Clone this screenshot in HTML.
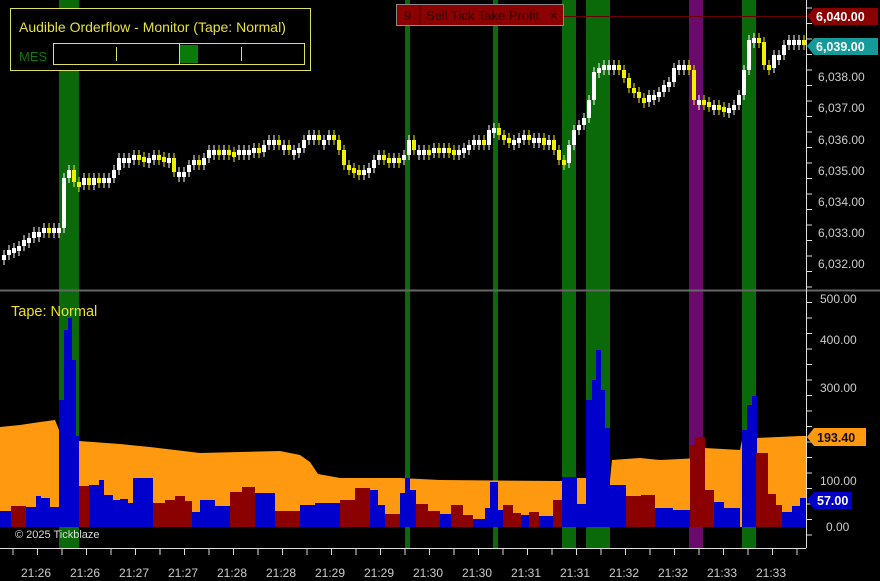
<!DOCTYPE html><html><head><meta charset="utf-8"><style>
body{margin:0;background:#000;width:880px;height:581px;overflow:hidden;font-family:"Liberation Sans",sans-serif}
svg{position:absolute;left:0;top:0}
</style></head><body>
<svg id="s" width="880" height="581" xmlns="http://www.w3.org/2000/svg">
<rect width="880" height="581" fill="#000"/>
<g id="bands"></g>
<line x1="548" y1="16.5" x2="806" y2="16.5" stroke="#6a0000" stroke-width="1"/>
<g id="cand"></g>
<g id="lower"></g>
<line x1="0" y1="290.5" x2="880" y2="290.5" stroke="#666" stroke-width="2"/>
<line x1="806.5" y1="0" x2="806.5" y2="548" stroke="#ddd"/>
<line x1="0" y1="548.5" x2="806" y2="548.5" stroke="#ddd"/>
<g id="ticks" stroke="#ddd"></g>
<g font-size="12" fill="#ccc" font-family="Liberation Sans,sans-serif">
<text x="818" y="81">6,038.00</text><text x="818" y="112">6,037.00</text><text x="818" y="144">6,036.00</text><text x="818" y="175">6,035.00</text><text x="818" y="206">6,034.00</text><text x="818" y="237">6,033.00</text><text x="818" y="268">6,032.00</text>
<text x="820" y="303">500.00</text><text x="820" y="344">400.00</text><text x="820" y="392">300.00</text><text x="820" y="485">100.00</text><text x="826" y="531">0.00</text>
</g>
<path d="M807 16 L814 8 H878 V25 H814Z" fill="#8b0000"/>
<text x="816" y="21" font-size="12.5" font-weight="bold" fill="#fff">6,040.00</text>
<path d="M807 46 L814 38 H878 V55 H814Z" fill="#159a9a"/>
<text x="816" y="51" font-size="12.5" font-weight="bold" fill="#fff">6,039.00</text>
<path d="M807 437 L814 428 H866 V446 H814Z" fill="#ff9a10"/>
<text x="817" y="442" font-size="12.5" font-weight="bold" fill="#111">193.40</text>
<path d="M807 500 L814 492 H852 V509 H814Z" fill="#0000c8"/>
<text x="817" y="505" font-size="12.5" font-weight="bold" fill="#fff">57.00</text>
<g id="tl" font-size="12" fill="#ccc"></g>
<text x="11" y="316" font-size="14.5" fill="#f0e020">Tape: Normal</text>
<text x="15" y="538" font-size="11" fill="#ddd">© 2025 Tickblaze</text>
<rect x="10.5" y="8.5" width="300" height="62" fill="#000" stroke="#e0e060"/>
<text x="19" y="32" font-size="14" fill="#e8e040">Audible Orderflow - Monitor (Tape: Normal)</text>
<text x="19" y="61" font-size="13" fill="#0a7a0a">MES</text>
<rect x="53.5" y="43.5" width="251" height="21" fill="none" stroke="#e0e060"/>
<line x1="116.5" y1="47" x2="116.5" y2="61" stroke="#e0e060"/>
<line x1="241.5" y1="47" x2="241.5" y2="61" stroke="#e0e060"/>
<line x1="179.5" y1="44" x2="179.5" y2="64" stroke="#e0e060"/>
<rect x="180" y="45" width="18" height="18" fill="#0a7a0a"/>
<rect x="396.5" y="4.5" width="167" height="21" fill="#8b0000" stroke="#888"/>
<line x1="420" y1="5" x2="420" y2="25" stroke="#400"/>
<text x="404" y="20" font-size="13" fill="#2a0000">9</text>
<text x="426" y="20" font-size="13" fill="#2a0000">Sell Tick Take Profit</text>
<text x="550" y="20" font-size="13" fill="#2a0000">×</text>
</svg>
<script>
(function(){
var NS="http://www.w3.org/2000/svg";
function el(p,t,a){var e=document.createElementNS(NS,t);for(var k in a)e.setAttribute(k,a[k]);document.getElementById(p).appendChild(e);return e;}
[[59,20,"#0a6a0a"],[405,5,"#0a6a0a"],[493,5,"#0a6a0a"],[562,14,"#0a6a0a"],[586,24,"#0a6a0a"],[689,14,"#6a0a6a"],[742,14,"#0a6a0a"]].forEach(function(b){el("bands","rect",{x:b[0],y:0,width:b[1],height:548,fill:b[2]});});
var ys=[255,250,248,246,240,238,232,232,228,230,228,228,178,170,182,185,178,185,178,180,178,178,170,158,158,158,155,157,158,158,155,157,160,158,172,172,172,165,160,165,158,150,150,155,150,152,155,150,150,150,148,152,145,140,140,145,145,150,150,148,140,135,135,140,140,135,140,150,165,168,170,172,170,168,160,155,158,160,158,160,155,140,150,150,150,152,148,150,148,150,152,150,148,145,140,140,145,130,128,135,138,142,140,138,135,140,138,138,145,140,150,160,163,145,130,125,118,100,72,68,65,65,65,70,78,88,92,98,102,95,95,92,85,82,68,65,65,70,100,100,102,107,105,107,108,108,105,95,70,40,38,42,65,68,55,55,45,40,40,40,42];
for(var i=0;i<ys.length;i++){var x=2+5*i,p=i?ys[i-1]:ys[i]+5,c=ys[i];var tp=Math.min(p,c),h=Math.max(Math.abs(p-c),5);var col=c>p?"#f0f000":"#fff";
el("cand","line",{x1:x+2,y1:tp-5,x2:x+2,y2:tp+h+5,stroke:col,"stroke-width":1});
el("cand","rect",{x:x,y:tp,width:4,height:h,fill:col});}
var op=[[0,427],[20,425],[40,422],[55,420],[59,430],[79,441],[120,444],[150,447],[200,453],[240,452],[280,451],[300,455],[310,462],[318,474],[340,478],[400,478],[440,480],[560,481],[577,481],[577,478],[586,478],[610,480],[612,460],[640,458],[660,460],[700,458],[705,448],[740,450],[742,440],[756,440],[756,438],[800,436],[806,436]];
var d="M0 527 ";op.forEach(function(q){d+="L"+q[0]+" "+q[1]+" ";});d+="L806 527Z";
el("lower","path",{d:d,fill:"#ff9a10"});
var B="#0000cc",R="#8b0000";
var bars=[[0,11,511,B],[11,15,506,R],[26,10,507,B],[36,5,496,B],[41,9,498,B],[50,9,507,B],[59,5,400,B],[64,4,330,B],[68,4,318,B],[72,4,360,B],[76,3,436,B],[79,10,486,R],[89,10,485,B],[99,5,480,B],[104,9,495,B],[113,7,500,B],[120,8,499,B],[128,5,503,B],[133,20,478,B],[153,12,503,R],[165,10,500,R],[175,10,496,R],[185,7,501,R],[192,8,512,B],[200,15,500,B],[215,15,506,B],[230,12,492,R],[242,13,487,R],[255,20,493,B],[275,25,511,R],[300,15,505,B],[315,25,503,B],[340,15,500,R],[355,15,488,R],[370,8,490,B],[378,7,505,B],[385,15,514,R],[400,5,493,B],[405,5,478,B],[410,6,490,B],[416,12,504,R],[428,12,511,R],[440,11,514,B],[451,12,505,R],[463,10,515,R],[473,12,519,B],[485,5,508,B],[490,8,482,B],[498,5,510,B],[503,10,505,R],[513,8,513,R],[521,8,515,B],[529,10,512,R],[539,14,516,B],[553,9,500,R],[562,15,477,B],[577,9,504,B],[586,6,400,B],[592,4,380,B],[596,5,350,B],[601,4,390,B],[605,5,428,B],[610,16,485,B],[626,15,496,R],[641,14,495,R],[655,18,508,B],[673,17,510,B],[690,5,445,R],[695,10,437,R],[705,9,490,R],[714,10,502,B],[724,16,508,B],[742,5,430,B],[747,5,405,B],[752,5,396,B],[756,12,453,R],[768,8,494,R],[776,6,505,R],[782,10,512,B],[792,8,506,B],[800,6,498,B]];
bars.forEach(function(b){el("lower","rect",{x:b[0],y:b[2],width:b[1],height:527-b[2],fill:b[3]});});
for(var y=8;y<548;y+=15.5){el("ticks","line",{x1:806,y1:y,x2:812,y2:y});}
for(var x2=13;x2<806;x2+=24.5){el("ticks","line",{x1:x2,y1:549,x2:x2,y2:555});}
var lab=["21:26","21:26","21:27","21:27","21:28","21:28","21:29","21:29","21:30","21:30","21:31","21:31","21:32","21:32","21:33","21:33"];
lab.forEach(function(t,i){var e=el("tl","text",{x:21+49*i,y:577});e.textContent=t;});
})();
</script>
</body></html>
